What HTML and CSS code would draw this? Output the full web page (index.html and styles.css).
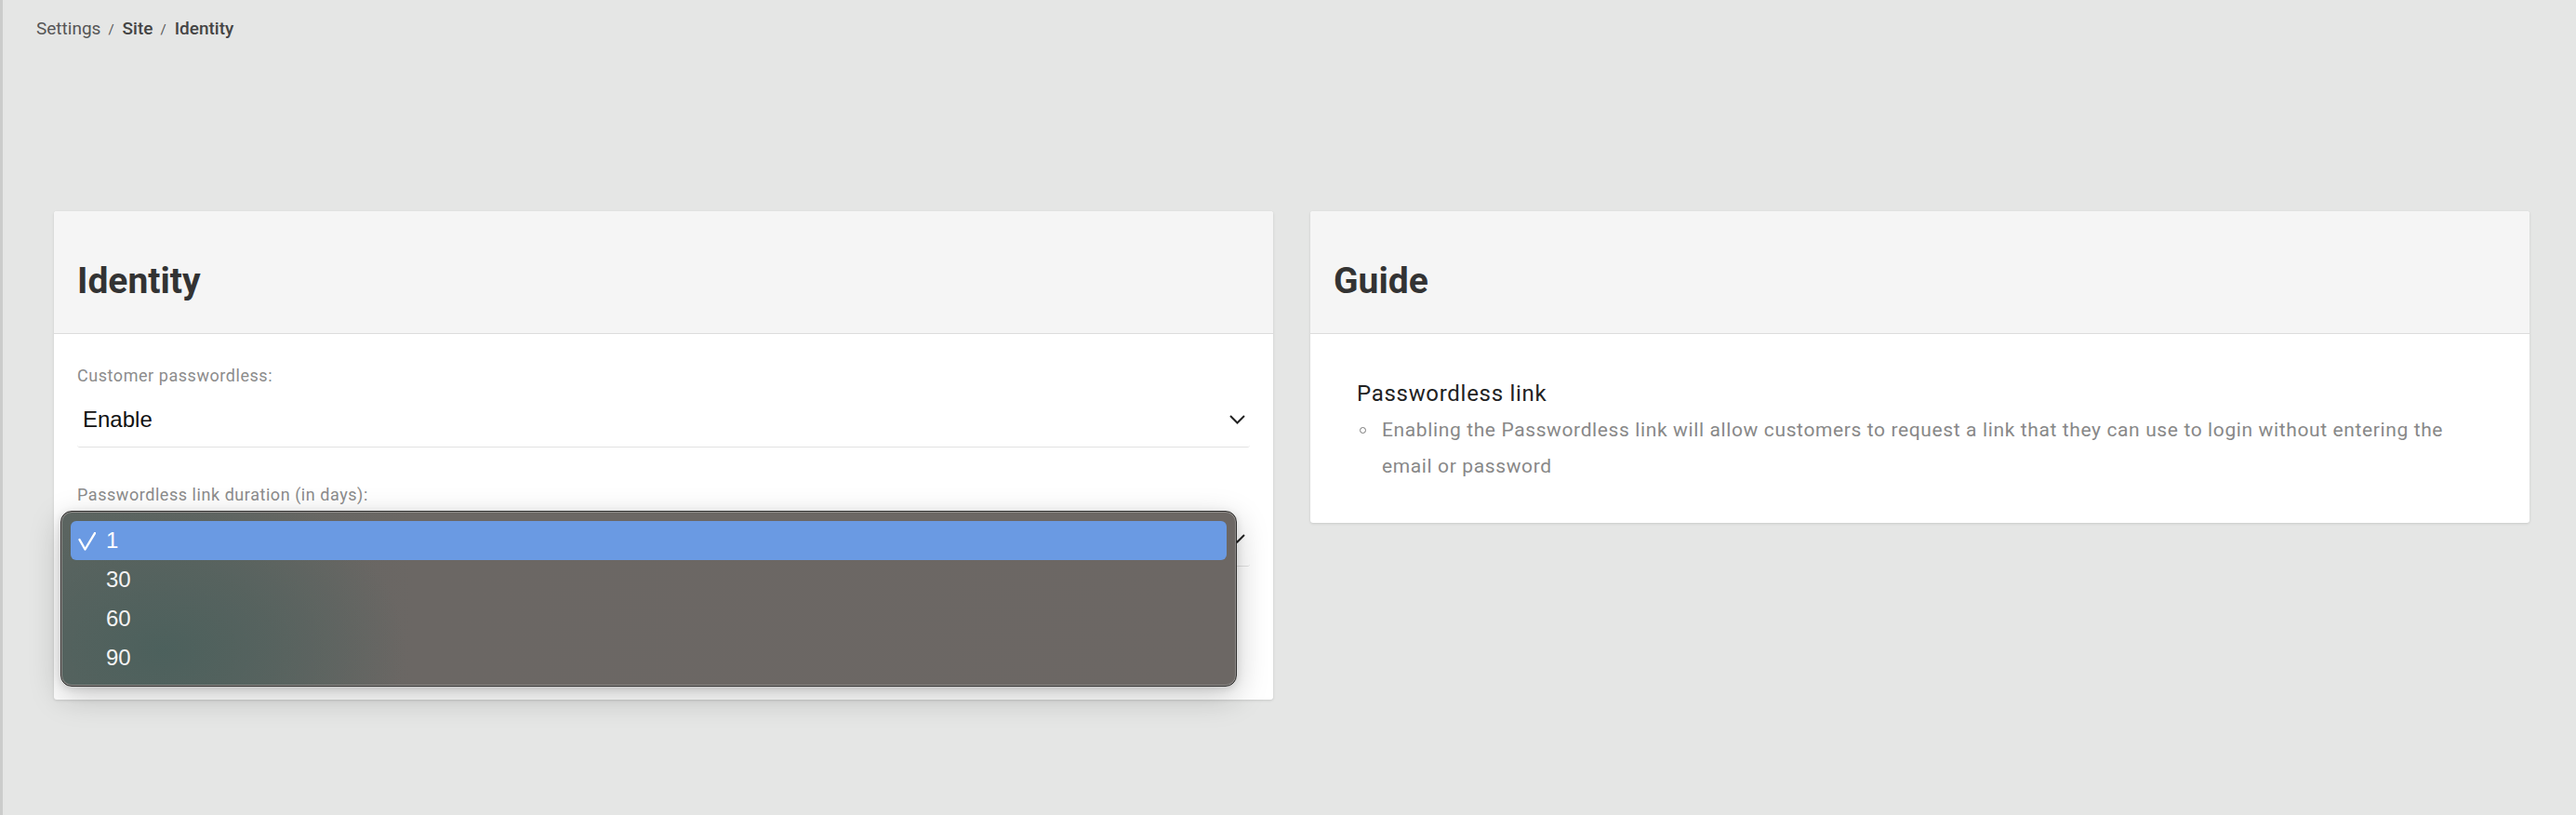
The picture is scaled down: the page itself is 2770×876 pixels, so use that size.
FILE: index.html
```html
<!DOCTYPE html>
<html lang="en">
<head>
<meta charset="utf-8">
<title>Identity</title>
<link rel="stylesheet" href="styles.css">
</head>
<body>
<div class="page">
  <nav class="breadcrumb">
    <span class="crumb">Settings</span>
    <span class="sep">/</span>
    <span class="crumb strong">Site</span>
    <span class="sep">/</span>
    <span class="crumb strong">Identity</span>
  </nav>

  <div class="columns">
    <section class="card">
      <header class="card-head"><h2>Identity</h2></header>
      <div class="card-body form-body">
        <div class="field">
          <div class="label">Customer passwordless:</div>
          <div class="select">
            <span class="value">Enable</span>
            <svg class="chev" width="17" height="10" viewBox="0 0 17 10"><polyline points="1,1 8.5,8.5 16,1" fill="none" stroke="#222" stroke-width="2"/></svg>
          </div>
        </div>
        <div class="field second">
          <div class="label">Passwordless link duration (in days):</div>
          <div class="select">
            <span class="value">1</span>
            <svg class="chev" width="17" height="10" viewBox="0 0 17 10"><polyline points="1,1 8.5,8.5 16,1" fill="none" stroke="#222" stroke-width="2"/></svg>
          </div>
          <div class="popup">
            <div class="opt selected">
              <svg class="check" width="19" height="20" viewBox="0 0 19 20"><polyline points="1.5,8 7.5,18.5 18,1" fill="none" stroke="#fff" stroke-width="2.4" stroke-linecap="round" stroke-linejoin="round"/></svg>
              <span>1</span>
            </div>
            <div class="opt"><span>30</span></div>
            <div class="opt"><span>60</span></div>
            <div class="opt"><span>90</span></div>
          </div>
        </div>
      </div>
    </section>

    <section class="card guide">
      <header class="card-head"><h2>Guide</h2></header>
      <div class="card-body guide-body">
        <h3>Passwordless link</h3>
        <ul class="guide-list">
          <li><span class="dot"><i></i></span><span class="txt">Enabling the Passwordless link will allow customers to request a link that they can use to login without entering the email or password</span></li>
        </ul>
      </div>
    </section>
  </div>
</div>
</body>
</html>
```

FILE: styles.css
```css
html, body {
  margin: 0;
  padding: 0;
}
body {
  background: #e5e6e5;
  font-family: Roboto, "Liberation Sans", Arial, sans-serif;
  width: 2770px;
  height: 876px;
  overflow: hidden;
}
.page {
  height: 876px;
  border-left: 3px solid #cbcccb;
  box-sizing: border-box;
  padding-left: 55px;
}
.breadcrumb {
  display: flex;
  align-items: baseline;
  padding-top: 20px;
  margin-left: -19px;
  font-size: 19px;
  line-height: 22px;
  height: 22px;
  color: #555;
}
.crumb.strong {
  color: #444;
  font-weight: 500;
}
.sep {
  font-size: 15px;
  color: #555;
  margin: 0 9px 0 8px;
}
.columns {
  display: grid;
  grid-template-columns: 1311px 1311px;
  column-gap: 40px;
  align-items: start;
  margin-top: 185px;
}
.card {
  background: #fff;
  border-radius: 3px;
  box-shadow: 0 1px 3px rgba(0, 0, 0, 0.13);
  position: relative;
}
.card-head {
  background: #f5f5f5;
  border-bottom: 1px solid #dcdcdc;
  border-radius: 3px 3px 0 0;
  padding: 52px 25px 33px;
}
.card-head h2 {
  margin: 0;
  font-size: 39px;
  line-height: 46px;
  font-weight: 700;
  color: #333;
}
.form-body {
  padding: 34px 25px 143px;
}
.field {
  position: relative;
}
.field.second {
  margin-top: 40px;
}
.label {
  font-size: 18px;
  line-height: 21px;
  letter-spacing: 0.55px;
  color: #8c8c8c;
}
.select {
  margin-top: 23px;
  display: flex;
  align-items: center;
  justify-content: space-between;
  padding: 0 6px 15px;
  border-bottom: 1px solid #e2e2e2;
  border-radius: 0 0 3px 3px;
}
.value {
  font-family: "Liberation Sans", Arial, sans-serif;
  font-size: 24px;
  line-height: 28px;
  color: #111;
}
.chev {
  display: block;
  margin-right: -1px;
}
.popup {
  position: absolute;
  left: -18px;
  top: 28px;
  width: 1265px;
  box-sizing: border-box;
  border: 1px solid #2f2e2d;
  border-radius: 12px;
  padding: 10px 10px 9px;
  background:
    radial-gradient(ellipse 260px 190px at 110px 150px, rgba(74, 96, 92, 0.9) 0%, rgba(80, 97, 93, 0.7) 45%, rgba(108, 103, 100, 0) 100%),
    linear-gradient(90deg, #5e6561 0%, #6b6764 30%, #6c6764 100%);
  box-shadow: inset 0 0 0 1px #8e8b89, 0 10px 34px rgba(0, 0, 0, 0.22), 0 2px 8px rgba(0, 0, 0, 0.12);
}
.opt {
  position: relative;
  height: 42px;
  display: flex;
  align-items: center;
  padding-left: 38px;
  border-radius: 6px;
  font-family: "Liberation Sans", Arial, sans-serif;
  font-size: 24px;
  line-height: 42px;
  color: #f3f3f3;
}
.opt.selected {
  background: #6a9ae3;
  color: #fff;
}
.check {
  position: absolute;
  left: 8px;
  top: 12px;
}
.guide-body {
  padding: 50px 50px 41px;
}
.guide-body h3 {
  margin: 0;
  font-size: 24px;
  line-height: 28px;
  font-weight: 400;
  letter-spacing: 0.7px;
  color: #222;
}
.guide-list {
  list-style: none;
  margin: 6px 0 0;
  padding: 0;
}
.guide-list li {
  display: grid;
  grid-template-columns: 27px 1fr;
  font-size: 21px;
  line-height: 39px;
  letter-spacing: 0.62px;
  color: #888;
}
.dot {
  display: flex;
  align-items: flex-start;
  padding-top: 16px;
}
.dot i {
  display: block;
  width: 5px;
  height: 5px;
  margin-left: 3px;
  border: 1px solid #777;
  border-radius: 50%;
}
```
